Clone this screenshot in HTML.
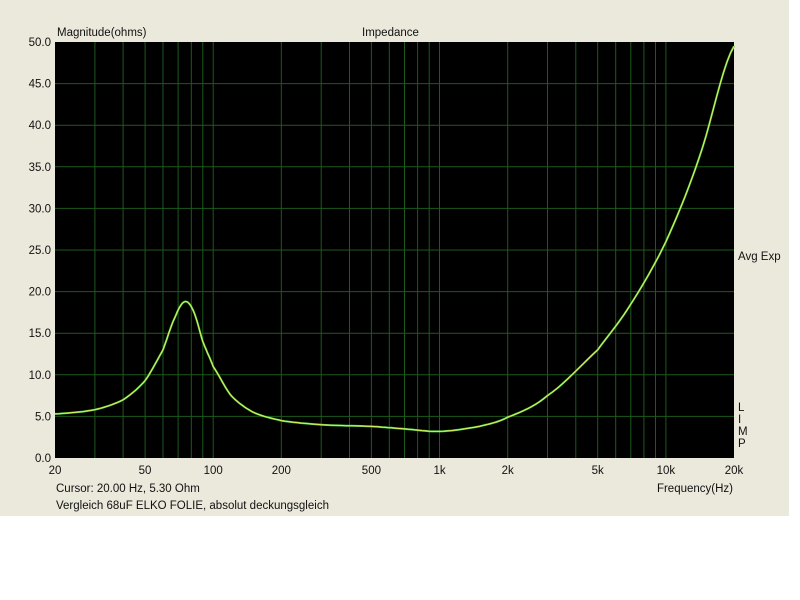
<!DOCTYPE html>
<html><head><style>
body{margin:0;width:800px;height:600px;background:#fff;position:relative;overflow:hidden;font-family:"Liberation Sans",Arial,sans-serif;}
#bg{position:absolute;left:0;top:0;width:789px;height:516px;background:#ebe9dc;}
svg{position:absolute;left:0;top:0}
text{font-size:11.5px;fill:#111;font-family:"Liberation Sans",Arial,sans-serif}
</style></head><body>
<div id="bg"></div>
<svg id="s" width="800" height="600"></svg>
<script>
var s=document.getElementById('s'),X0=55,X1=734,Y0=42,Y1=458;
function fx(f){return X0+(X1-X0)*Math.log10(f/20)/3}
function fy(z){return Y1-(Y1-Y0)*z/50}
var h='<rect x="55" y="42" width="679" height="416" fill="#000"/>';
var fs=[];for(var d=10;d<=10000;d*=10)for(var m=1;m<=9;m++){var f=m*d;if(f>20&&f<20000)fs.push(f)}
fs.forEach(function(f){var x=fx(f).toFixed(1);h+='<line x1="'+x+'" y1="42" x2="'+x+'" y2="458" stroke="#1d5a1d" stroke-width="1"/>'});
for(var z=5;z<50;z+=5){var y=fy(z);h+='<line x1="55" y1="'+y+'" x2="734" y2="'+y+'" stroke="#1d5a1d"/>'}
for(var z=0;z<=50;z+=5){h+='<text x="51" y="'+(fy(z)+4)+'" text-anchor="end">'+z.toFixed(1)+'</text>'}
[[20,'20'],[50,'50'],[100,'100'],[200,'200'],[500,'500'],[1000,'1k'],[2000,'2k'],[5000,'5k'],[10000,'10k'],[20000,'20k']].forEach(function(a){h+='<text x="'+fx(a[0])+'" y="474" text-anchor="middle">'+a[1]+'</text>'});
var P=[[20,5.3],[30,5.8],[40,7],[50,9.3],[60,13],[68,17],[75,18.8],[82,17.6],[90,14],[100,11],[120,7.5],[150,5.5],[200,4.5],[300,4.0],[500,3.8],[700,3.5],[1000,3.2],[1500,3.8],[2000,4.9],[3000,7.5],[5000,13],[7000,18.5],[10000,26],[14000,36],[20000,49.5]];
var pts=[];
for(var i=0;i<P.length-1;i++){var a=P[i],b=P[i+1],p0=P[Math.max(0,i-1)],p3=P[Math.min(P.length-1,i+2)];
for(var t=0;t<1;t+=0.1){var t2=t*t,t3=t2*t;
var zz=0.5*((2*a[1])+(-p0[1]+b[1])*t+(2*p0[1]-5*a[1]+4*b[1]-p3[1])*t2+(-p0[1]+3*a[1]-3*b[1]+p3[1])*t3);
var lx=fx(a[0])+(fx(b[0])-fx(a[0]))*t;pts.push(lx.toFixed(1)+','+fy(zz).toFixed(1))}}
pts.push(fx(20000)+','+fy(49.5));
var pp=pts.join(' ');
h+='<polyline points="'+pp+'" fill="none" stroke="#4cc83c" stroke-width="2"/>';
h+='<polyline points="'+pp+'" fill="none" stroke="#e0ec60" stroke-width="1"/>';
h+='<text x="57" y="36">Magnitude(ohms)</text><text x="362" y="36">Impedance</text>';
h+='<text x="738" y="260">Avg Exp</text>';
['L','I','M','P'].forEach(function(c,i){h+='<text x="738" y="'+(411+i*12)+'">'+c+'</text>'});
h+='<text x="56" y="492">Cursor: 20.00 Hz, 5.30 Ohm</text><text x="733" y="492" text-anchor="end">Frequency(Hz)</text>';
h+='<text x="56" y="509">Vergleich 68uF ELKO FOLIE, absolut deckungsgleich</text>';
s.innerHTML=h;
</script>
</body></html>
